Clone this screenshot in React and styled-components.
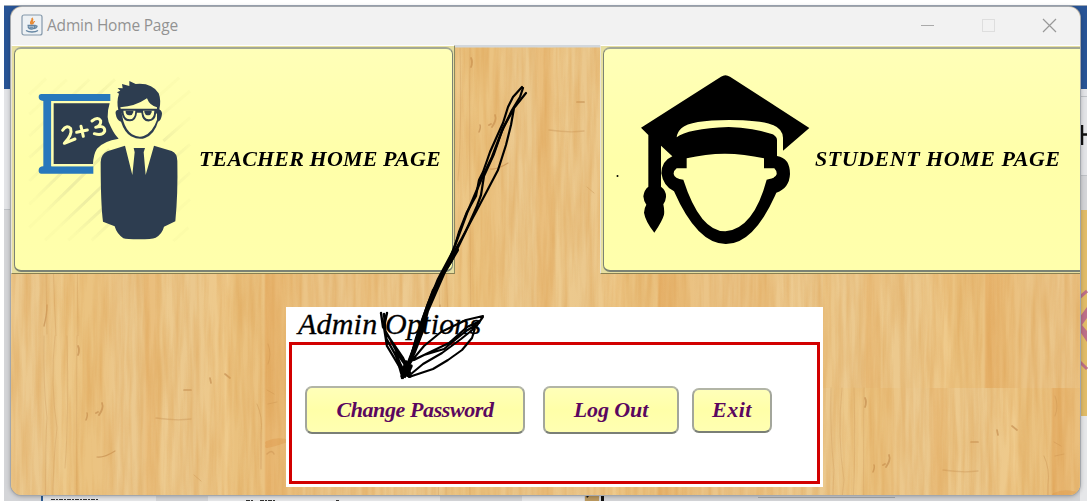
import React from 'react';
import styled, { createGlobalStyle } from 'styled-components';

const Global = createGlobalStyle`
  * { box-sizing: border-box; }
  body { margin: 0; background: #fff; overflow: hidden; }
`;

const Desktop = styled.div`
  position: relative;
  width: 1089px;
  height: 502px;
  padding: 7px 9px 6px 11px;
  overflow: hidden;
`;

const Backdrop = styled.svg`
  position: absolute;
  inset: 0;
`;

const Window = styled.main`
  position: relative;
  display: flex;
  flex-direction: column;
  width: 1069px;
  height: 488px;
  border-radius: 11px;
  overflow: hidden;
  background: #eac586;
  box-shadow: 0 0 0 1px #a3a7ac, 0 1px 5px rgba(0, 0, 0, 0.35);
`;

const TitleBar = styled.header`
  display: flex;
  align-items: center;
  flex: none;
  height: 38px;
  padding: 0 23px 2px 10px;
  background: #f2f2f2;
`;

const Title = styled.h1`
  flex: 1;
  margin: 0 0 0 4px;
  font: 400 15.5px/20px 'Open Sans', 'Noto Sans', sans-serif;
  letter-spacing: ${(p) => p.$track}px;
  color: #929292;
`;

const Controls = styled.div`
  display: flex;
  gap: 46px;
`;

const Content = styled.div`
  position: relative;
  flex: 1;
  display: flex;
  flex-direction: column;
`;

const Wood = styled.svg`
  position: absolute;
  inset: 0;
`;

const CardRow = styled.div`
  position: relative;
  display: flex;
  gap: 145px;
  height: 229px;
`;

const CardFrame = styled.div`
  flex: none;
  width: ${(p) => p.$width}px;
  height: 229px;
  padding: 1px 1px 1px 2px;
  background: #e6dfa0;
  border-top: 1px solid #fff;
  border-left: 1px solid #e9e4d8;
  border-right: 1px solid #8c8a60;
  border-bottom: 1px solid #8a8052;
`;

const Card = styled.button`
  display: flex;
  align-items: center;
  width: 100%;
  height: 225px;
  padding: 0 0 1px ${(p) => p.$inset}px;
  border: 1.5px solid #7b8274;
  border-top: 2px solid #a3a896;
  border-bottom-width: 2px;
  border-radius: 7px;
  background: linear-gradient(#ffffb8, #ffffa9 50%, #ffffac);
`;

const CardLabel = styled.span`
  margin-left: ${(p) => p.$gap}px;
  font: italic 700 22px/28px 'Liberation Serif', serif;
  letter-spacing: ${(p) => p.$track}px;
  white-space: nowrap;
  color: #000;
`;

const Options = styled.section`
  position: relative;
  width: 537px;
  height: 180px;
  margin: 33px 0 0 275px;
  padding: 0 3px 3px;
  background: #fff;
`;

const OptionsTitle = styled.h2`
  height: 35px;
  margin: 0;
  padding-left: 9px;
  font: italic 400 30px/34px 'Liberation Serif', serif;
  letter-spacing: ${(p) => p.$track}px;
  color: #000;
  -webkit-text-stroke: 0.3px #000;
`;

const OptionsBody = styled.div`
  display: flex;
  align-items: center;
  height: 142px;
  padding: 0 0 6px 13px;
  border: 3px solid #d20000;
`;

const Action = styled.button`
  width: ${(p) => p.$width}px;
  height: ${(p) => p.$height}px;
  margin-right: ${(p) => p.$gap}px;
  padding: 0 0 1px;
  border: 2px solid #a3a69b;
  border-top-color: #b2b5a6;
  border-bottom-color: #7a7f76;
  border-radius: 7px;
  background: linear-gradient(#ffffb9, #ffffa8 50%, #ffffb2);
  font: italic 700 22px/28px 'Liberation Serif', serif;
  letter-spacing: ${(p) => p.$track}px;
  white-space: nowrap;
  color: #5b075f;
`;

const Ink = styled.svg`
  position: absolute;
  inset: 0;
  pointer-events: none;
`;

const JavaIcon = () => (
  <svg width="22" height="22" viewBox="0 0 22 22" fill="none">
    <rect x="1" y="1" width="20" height="20" rx="2" fill="#edf1f4" stroke="#8498aa" strokeWidth="1.2" />
    <path d="M10.500 10.500C7.500 8 12 7 11 4C13.500 6.500 9.500 8 11.500 10.500M12.500 10C11 9 13.500 8 13.500 7" stroke="#e98932" strokeWidth="1.3" />
    <path d="M6.500 11.500H14C14 16 8 16 7 12.500M14 12C17.500 11 16 14 13 14.500M5 16.500C8 18.500 14 18.500 17 16.500" stroke="#6485a2" strokeWidth="1.3" />
    <path d="M8 12.500H13L12 14.500H9Z" fill="#7694af" />
  </svg>
);

const stripes = [
  [0, '#ebc88c'], [22, '#edc98a'], [42, '#ebc380'], [60, '#ebc382'], [78, '#ecca90'],
  [98, '#ebc88d'], [104, '#eabe7c'], [116, '#eac07f'], [119, '#edca8e'], [149, '#ebc88d'],
  [185, '#efca8b'], [192, '#eac17e'], [221, '#ebc382'], [223, '#e7b36c'], [245, '#eabe7b'],
  [262, '#ebc486'], [300, '#ebc68b'], [325, '#ebc282'], [350, '#edcb91'], [393, '#ebc88d'],
];

function Knots() {
  return (
    <g fill="none" stroke="#b5793e" strokeLinecap="round" opacity=".5">
      <path d="M43 84q2-5 1-7" strokeWidth="1.5" />
      <path d="M56 79q5-7 3-12M55 76l-2 1" strokeWidth="1.8" />
      <path d="M54 121q7 1 18-6" strokeWidth="1.2" />
      <path d="M141 54h7M167 42l1 5M182 38l5 4" strokeWidth="1.7" />
      <path d="M113 82q20 3 35 1" strokeWidth="1.3" opacity=".55" />
      <path d="M224 107q9-4 18-2q-8 3-18 5" strokeWidth="4" stroke="#d98c3c" opacity=".6" />
      <path d="M224 118q5-5 7 0" strokeWidth="1.5" opacity=".6" />
      <path d="M214 68q6 13 4 29v36M151 139l7 6" strokeWidth=".9" opacity=".65" />
      <path d="M1 0q-1 48 3 82q-3 42 0 204M12 0q-5 48 2 92q-8 62-1 196M24 0q2 80-2 132M34 0q-1 100 1 288" strokeWidth=".8" opacity=".5" />
      <path d="M35 10q2 4 0 9" strokeWidth="1.8" />
      <path d="M1 278q3-12 3-21" strokeWidth="1.4" />
      <path d="M225 8q4 10 0 20M224 54l7 4M225 68l9-2" strokeWidth="1" opacity=".5" />
    </g>
  );
}

function WoodTile({ x, y }) {
  return (
    <g transform={`translate(${x} ${y})`}>
      <rect width="394" height="289" fill="url(#stripe)" />
      <Knots />
    </g>
  );
}

function WoodGrain() {
  return (
    <Wood width="1069" height="451" viewBox="11 45 1069 451">
      <defs>
        <linearGradient id="stripe" gradientUnits="userSpaceOnUse" x1="0" x2="394" y1="0" y2="0">
          {stripes.map(([at, color]) => <stop key={at} offset={at / 394} stopColor={color} />)}
        </linearGradient>
        <filter id="grain" x="0" y="0" width="100%" height="100%" colorInterpolationFilters="sRGB">
          <feTurbulence type="fractalNoise" baseFrequency=".16 .012" numOctaves="3" seed="4" />
          <feColorMatrix values="0 0 0 0 .85  0 0 0 0 .60  0 0 0 0 .28  .75 0 0 0 -.24" />
        </filter>
        <clipPath id="right"><rect x="823" y="45" width="260" height="451" /></clipPath>
      </defs>
      {[-350, 43, 436, 829].map((x) => <WoodTile key={x} x={x} y={48} />)}
      {[-350, 43, 436, 829].map((x) => <WoodTile key={x} x={x} y={336} />)}
      <g clipPath="url(#right)">
        <WoodTile x={763} y={100} />
        <WoodTile x={436} y={388} />
        <WoodTile x={830} y={388} />
      </g>
      <rect x="11" y="45" width="1069" height="451" filter="url(#grain)" />
      <path d="M455 46H600" stroke="#d2d7dc" strokeWidth="3" />
    </Wood>
  );
}

const Teacher = () => (
  <svg width="165" height="167" viewBox="81 105 495 501" fill="none">
    <defs>
      <radialGradient id="hatchFade"><stop offset=".6" stopColor="#fff" /><stop offset="1" stopColor="#fff" stopOpacity=".2" /></radialGradient>
      <mask id="hatchMask"><rect x="81" y="105" width="495" height="501" fill="url(#hatchFade)" /></mask>
    </defs>
    <path mask="url(#hatchMask)" d="M88 160l50-47M88 220l112-104M88 285l180-170M88 350L345 115M88 420l220-215M88 490l240-235M88 560l240-235M135 598l200-190M205 598l130-120M275 598l70-65M470 170l68-60M475 230l95-80M490 300l80-70M500 370l70-60M510 450l60-55M510 530l60-55M520 600l45-40" stroke="#eeeea2" strokeWidth="9" />
    <path d="M124 159H331V180H154V376H280V398H124Q115 398 116 386Q117 377 130 376V180Q116 178 116 169Q116 159 124 159Z" fill="#2878bc" />
    <path d="M154 180H331V187H161V369H280V376H154Z" fill="#ffffb0" />
    <path d="M161 187H329Q315 232 333 259Q344 282 356 293Q310 300 291 323Q280 340 279 369H161Z" fill="#2d3d50" />
    <g stroke="#ffffb0" strokeWidth="9" strokeLinecap="round" strokeLinejoin="round">
      <path d="M188 268Q199 250 212 263Q218 280 193 307L225 294M230 274L262 267M243 256L250 286M276 240Q294 226 302 239Q304 253 287 259Q316 251 314 271Q307 285 283 278" />
    </g>
    <path d="M355 206Q349 182 357 158L351 154L361 149L353 141L368 142L366 129L388 135L388 120L407 129Q455 124 476 157Q484 178 478 205Q489 211 485 225Q482 240 474 242Q464 279 435 291Q417 298 393 286Q373 273 363 242Q350 238 347 218Q345 208 355 206Z" fill="#2d3d50" />
    <path d="M361 199Q406 196 441 172Q449 194 471 199V236Q459 273 431 285Q415 291 396 280Q378 267 370 240Z" fill="#ffffb0" />
    <path d="M359 203H474V214L468 219Q466 239 448 241Q427 243 424 215H411Q409 240 390 241Q370 241 365 218L359 214Z" fill="#2d3d50" />
    <path d="M370 209H406Q405 235 389 235Q371 234 370 209ZM429 209H463Q462 235 446 235Q430 234 429 209Z" fill="#ffffb0" />
    <path d="M377 209H400V214Q397 224 389 223Q379 224 377 214ZM433 209H455V214Q452 224 444 223Q436 224 433 214Z" fill="#2d3d50" />
    <path d="M375 314L322 331Q303 339 302 363Q302 491 309 542L344 556Q350 578 370 592Q379 595 417 595Q455 595 467 590Q487 578 492 557L526 541Q534 459 532 360Q532 337 515 330L462 314L437 402L431 334L435 321H401L404 334L397 402Z" fill="#2d3d50" />
  </svg>
);

const Student = () => (
  <svg width="172" height="171" viewBox="120 99 516 513" fill="none">
    <path d="M363 107Q376 98 390 107L628 261L549 329V290Q547 262 516 251Q476 237 388 237Q271 237 245 261Q232 272 230 289Q262 263 386 258Q461 260 518 280Q532 287 531 299V345Q570 351 570 399Q568 442 529 455Q462 609 378 609Q292 610 222 451Q190 436 184 397Q185 360 217 346L183 314V437Q199 449 198 468Q197 480 190 490Q194 509 192 521Q187 540 163 575Q136 541 132 515Q133 500 139 491Q131 480 130 466Q132 447 145 437V282L123 260Z" fill="#000" />
    <path d="M260 352Q373 324 492 352V382H523Q531 390 530 400Q527 412 500 416Q461 563 376 571Q300 571 250 416Q223 413 221 399Q220 390 230 382H260Z" fill="#ffffac" />
  </svg>
);

const Arrow = () => (
  <Ink width="1089" height="502" viewBox="0 0 1089 502" fill="none" stroke="#000" strokeLinecap="round" strokeLinejoin="round">
    <path d="M522 87L513 97L508 107L503 123L498 134L490 152L483 172L479 180L476 196L467 212L459 232L454 249L438 279L427 306L416 338L407 371" strokeWidth="2.2" />
    <path d="M523 88L520 97L512 110L502 131L494 154L484 176L481 195L477 206L465 233L451 262L433 290L421 323L405 377" strokeWidth="2.2" />
    <path d="M526 93L514 108L511 125L506 145L498 170L487 191L478 208L462 238L444 270L433 298L423 319L413 350L403 378" strokeWidth="2.2" />
    <path d="M512 112L503 128L492 157L482 178L467 213L457 240L447 266L434 293L424 318L414 347L406 368" strokeWidth="2.4" />
    <path d="M457 250L444 272L437 288L427 311L422 331L414 352L405 373" strokeWidth="4" />
    <path d="M384 314L386 338L395 354L403 369L402 378M381 313L383 327L389 337L399 356L406 366M387 313L384 327L387 346L399 366L404 372M388 336L403 358L410 373" strokeWidth="2.4" />
    <path d="M409 364L424 346L441 332L466 320L483 316L480 321L467 327L449 343L426 354L414 360M411 374L423 364L442 353L461 339L476 327L483 317M409 377L433 369L448 360L462 350L472 338L476 325L466 331L444 349L424 355L409 362" strokeWidth="2.1" />
    <path d="M396 353L402 374L411 366L407 375L410 376M406 362L402 376" strokeWidth="3.5" />
  </Ink>
);

const DesktopBackdrop = () => (
  <Backdrop width="1089" height="502" viewBox="0 0 1089 502">
    <path fill="#d4d5d8" d="M4 5H1087V501H4Z" />
    <path fill="#285496" d="M4 5H1087V89H4Z" />
    <path fill="#e3e4e7" d="M4 89H30V209H4ZM1070 89H1087V175H1070Z" />
    <path stroke="#bfc2c6" d="M4 209.500H11M1080 96.500H1087M1080 175.500H1087" />
    <path fill="#e1bc68" d="M1070 210H1087V416H1070Z" />
    <path d="M1087 291L1079 298M1079 361L1087 369" stroke="#bd6f88" strokeWidth="3" fill="none" />
    <path d="M1087 307L1079 318V330L1087 342V331L1082 325L1087 318Z" fill="#bd6f88" />
    <path d="M1082 125V145M1082 134.500H1087" stroke="#111" strokeWidth="2.500" />
    <path fill="#e6e7e9" d="M43 495H156V501H43ZM522 495H584V501H522ZM208 495H440V501H208ZM1080 416H1087V501H1080Z" />
    <path fill="#2c5c92" d="M41 495H43V501H41Z" />
    <path fill="#bc995f" d="M585 495H599V501H585Z" />
    <path fill="#111" d="M601 495H604V501H601ZM586 495H590L587 498Z" />
    <path stroke="#a8abae" d="M758 497.500H895" />
    <path stroke="#333" strokeDasharray="4 1 2 1" d="M51 499.500H98M246 500.500H254M260 500.500H276M336 500.500H339" />
    <path stroke="#9ea8b5" d="M4 5.500H1087" />
  </Backdrop>
);

export default function App() {
  return (
    <>
      <Global />
      <Desktop>
        <DesktopBackdrop />
        <Window>
          <TitleBar>
            <JavaIcon />
            <Title $track={-0.2}>Admin Home Page</Title>
            <Controls>
              <svg width="15" height="15"><path d="M1 7.500H14" stroke="#aaa" /></svg>
              <svg width="15" height="15"><rect x="1.500" y="1.500" width="12" height="12" fill="none" stroke="#dedede" /></svg>
              <svg width="15" height="15"><path d="M1 1L14 14M14 1L1 14" stroke="#999" strokeWidth="1.200" /></svg>
            </Controls>
          </TitleBar>
          <Content>
            <WoodGrain />
            <CardRow>
              <CardFrame $width={444}>
                <Card $inset={12}>
                  <Teacher />
                  <CardLabel $gap={7} $track={0.15}>TEACHER HOME PAGE</CardLabel>
                </Card>
              </CardFrame>
              <CardFrame $width={490}>
                <Card $inset={36}>
                  <Student />
                  <CardLabel $gap={3} $track={0.52}>STUDENT HOME PAGE</CardLabel>
                </Card>
              </CardFrame>
            </CardRow>
            <Options>
              <OptionsTitle $track={0.2}>Admin Options</OptionsTitle>
              <OptionsBody>
                <Action $width={220} $height={48} $gap={18} $track={-0.4}>Change Password</Action>
                <Action $width={136} $height={48} $gap={13} $track={-0.1}>Log Out</Action>
                <Action $width={80} $height={45} $gap={0} $track={0.5}>Exit</Action>
              </OptionsBody>
            </Options>
          </Content>
        </Window>
        <Arrow />
        <Ink width="1089" height="502"><circle cx="617.500" cy="176" r="1" /></Ink>
      </Desktop>
    </>
  );
}
